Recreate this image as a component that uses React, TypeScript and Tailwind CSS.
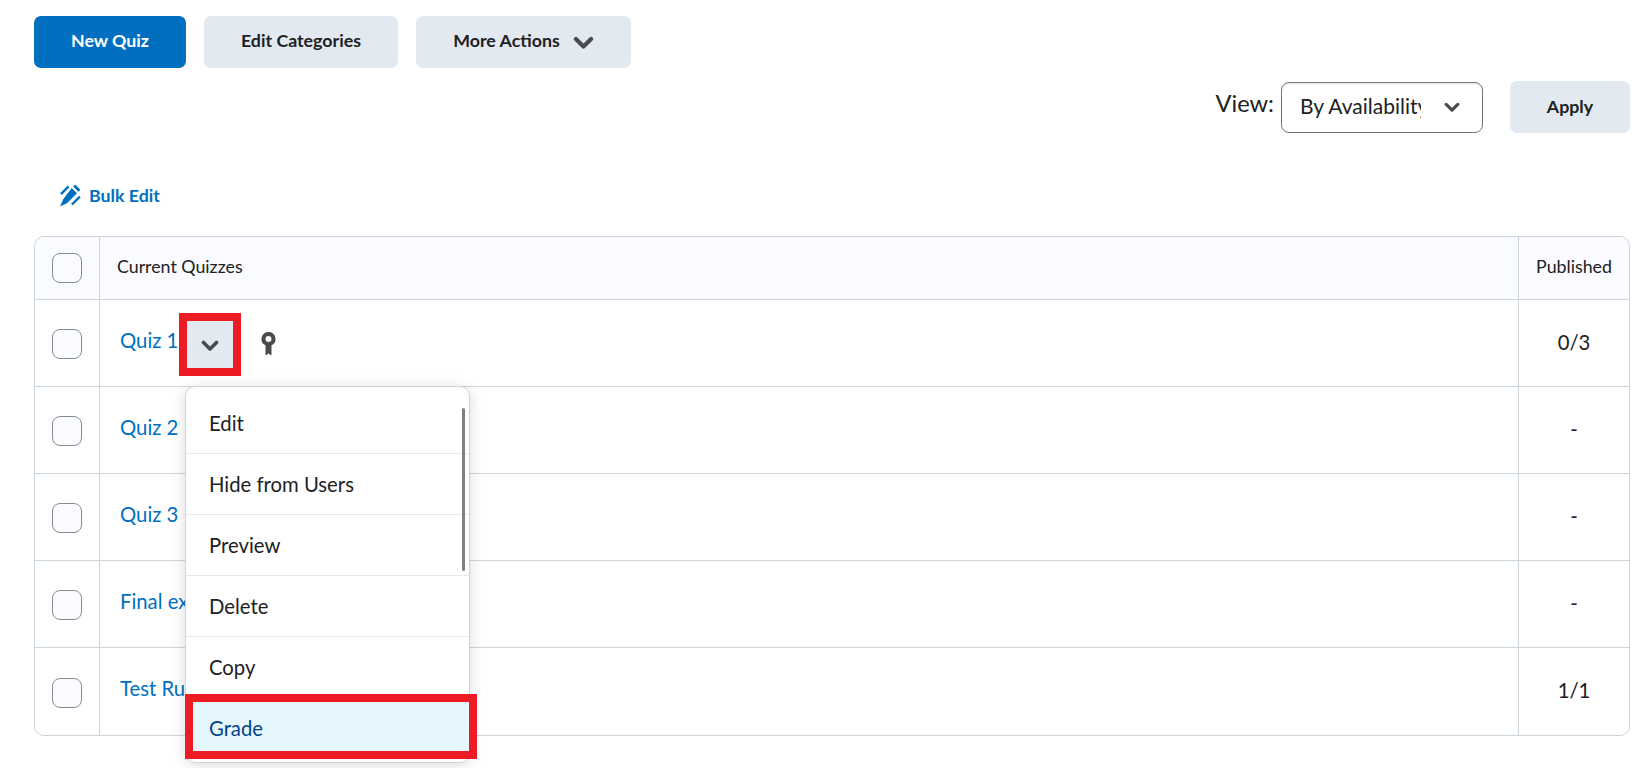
const rows = [
  { name: "Quiz 1", pub: "0/3" },
  { name: "Quiz 2", pub: "-" },
  { name: "Quiz 3", pub: "-" },
  { name: "Final exam", pub: "-" },
  { name: "Test Run", pub: "1/1" },
];

const menu = ["Edit", "Hide from Users", "Preview", "Delete", "Copy"];

function Chevron({ className }: { className: string }) {
  return (
    <svg viewBox="0 0 18 12" className={className} fill="none">
      <path d="M2.5 2.5 L9 9 L15.5 2.5" stroke="#494c4e" strokeWidth="3.6" strokeLinecap="round" strokeLinejoin="round" />
    </svg>
  );
}

function Check() {
  return <div className="w-[30px] h-[30px] rounded-[8px] border border-[#868b90] bg-[#f9fbff]" />;
}

export default function App() {
  return (
    <div className="w-[1641px] h-[768px] overflow-hidden bg-white pl-[34px] pr-[11px] pt-[16px] text-[#202122] font-['Lato','Liberation_Sans',sans-serif]">
      <div className="flex gap-[18px]">
        <button className="w-[152px] h-[52px] pb-[3px] rounded-[7px] bg-[#006fbf] text-white font-bold text-[17.8px]">New Quiz</button>
        <button className="w-[194px] h-[52px] pb-[3px] rounded-[7px] bg-[#e3e9f1] font-bold text-[17.8px]">Edit Categories</button>
        <button className="w-[215px] h-[52px] rounded-[7px] bg-[#e3e9f1] font-bold text-[17.8px] flex items-center justify-center gap-[13px]">
          <span className="mb-[3px]">More Actions</span>
          <Chevron className="w-[21px] h-[14px] mt-[1px]" />
        </button>
      </div>

      <div className="flex justify-end items-center mt-[13px] h-[52px]">
        <span className="text-[23.6px] mr-[7px] mb-[6px]">View:</span>
        <div className="w-[202px] h-[51px] rounded-[8px] border border-[#6e7477] shadow-[inset_0_2px_0_0_rgba(177,185,190,0.2)] flex items-center pl-[18px] pr-[22px] justify-between">
          <span className="w-[121px] mb-[3px] overflow-hidden whitespace-nowrap text-[21px]">By Availability</span>
          <Chevron className="w-[16px] h-[11px]" />
        </div>
        <button className="ml-[27px] w-[120px] h-[52px] pb-[1px] rounded-[7px] bg-[#e3e9f1] font-bold text-[17.8px]">Apply</button>
      </div>

      <div className="mt-[51px] h-[22px] flex items-center pl-[24px] gap-[6px] text-[#006fbf] font-bold text-[17.8px]">
        <svg viewBox="0 0 24 24" className="w-[25px] h-[25px]" fill="#006fbf">
          <path d="M16.5 1.5 L21.5 6.5 L19.6 8.4 L14.6 3.4 Z" />
          <path d="M13.2 4.8 L18.2 9.8 L8.6 19.4 L2 22.5 L5 15.6 Z" />
          <path d="M9.4 2.5 L11 4 L3.6 11.4 L2 9.9 Z" />
          <path d="M20.2 12.2 L21.8 13.8 L14.2 21.4 L12.6 19.9 Z" />
        </svg>
        Bulk Edit
      </div>

      <div className="mt-[30px] relative rounded-[10px] border border-[#cdd5dc]">
        <div className="flex h-[62px] bg-[#f9fbff] rounded-t-[10px]">
          <div className="w-[65px] flex items-center justify-center border-r border-[#cdd5dc]"><Check /></div>
          <div className="flex-1 flex items-center pl-[17px] pb-[3px] text-[17.8px] border-r border-[#cdd5dc]">Current Quizzes</div>
          <div className="w-[110px] flex items-center justify-center pb-[3px] text-[17.8px]">Published</div>
        </div>
        {rows.map((r, i) => (
          <div key={r.name} className={`flex border-t border-[#cdd5dc] ${i === 4 ? "h-[88px]" : "h-[87px]"}`}>
            <div className="w-[65px] flex items-center justify-center pt-[2px] border-r border-[#cdd5dc]"><Check /></div>
            <div className="flex-1 flex items-center pl-[20px] text-[20.3px] text-[#006fbf] border-r border-[#cdd5dc]">
              <span className="w-[59px] whitespace-nowrap mb-[6px]">{r.name}</span>
              {i === 0 && (
                <>
                  <div className="w-[62px] h-[63px] mt-[2px] border-[8px] border-[#ed1c24] bg-[#e3e9f1] flex items-center justify-center">
                    <Chevron className="w-[18px] h-[12px] mt-[4px]" />
                  </div>
                  <svg viewBox="0 0 14 24" className="ml-[20px] mt-[2px] w-[15px] h-[24px]" fill="#494c4e">
                    <path fillRule="evenodd" d="M7 0a7 7 0 0 1 3 13.3V23.5L7 21.5 4 23.5V13.3A7 7 0 0 1 7 0Zm0 4a3 3 0 1 0 0 6 3 3 0 0 0 0-6Z" />
                  </svg>
                </>
              )}
            </div>
            <div className="w-[110px] flex items-center justify-center pb-[2px] text-[20.3px]">{r.pub}</div>
          </div>
        ))}

        <div className="absolute left-[150px] top-[149px] w-[285px] h-[377px] bg-white rounded-[10px] border border-[#cdd5dc] shadow-[0_2px_14px_rgba(0,0,0,0.15)] pt-[6px]">
          {menu.map((m, i) => (
            <div key={m} className={`h-[61px] flex items-center pl-[23px] text-[20.3px] ${i === 4 ? "" : "border-b border-[#e3e9f1]"}`}>{m}</div>
          ))}
          <div className="absolute right-[4px] top-[21px] w-[3px] h-[163px] rounded-full bg-[#808080]" />
          <div className="absolute -left-px -right-[8px] top-[307px] h-[65px] border-[8px] border-[#ed1c24] bg-[#e6f6fd] flex items-center pl-[16px] pt-[3px] text-[20.3px] text-[#004489]">Grade</div>
        </div>
      </div>
    </div>
  );
}
